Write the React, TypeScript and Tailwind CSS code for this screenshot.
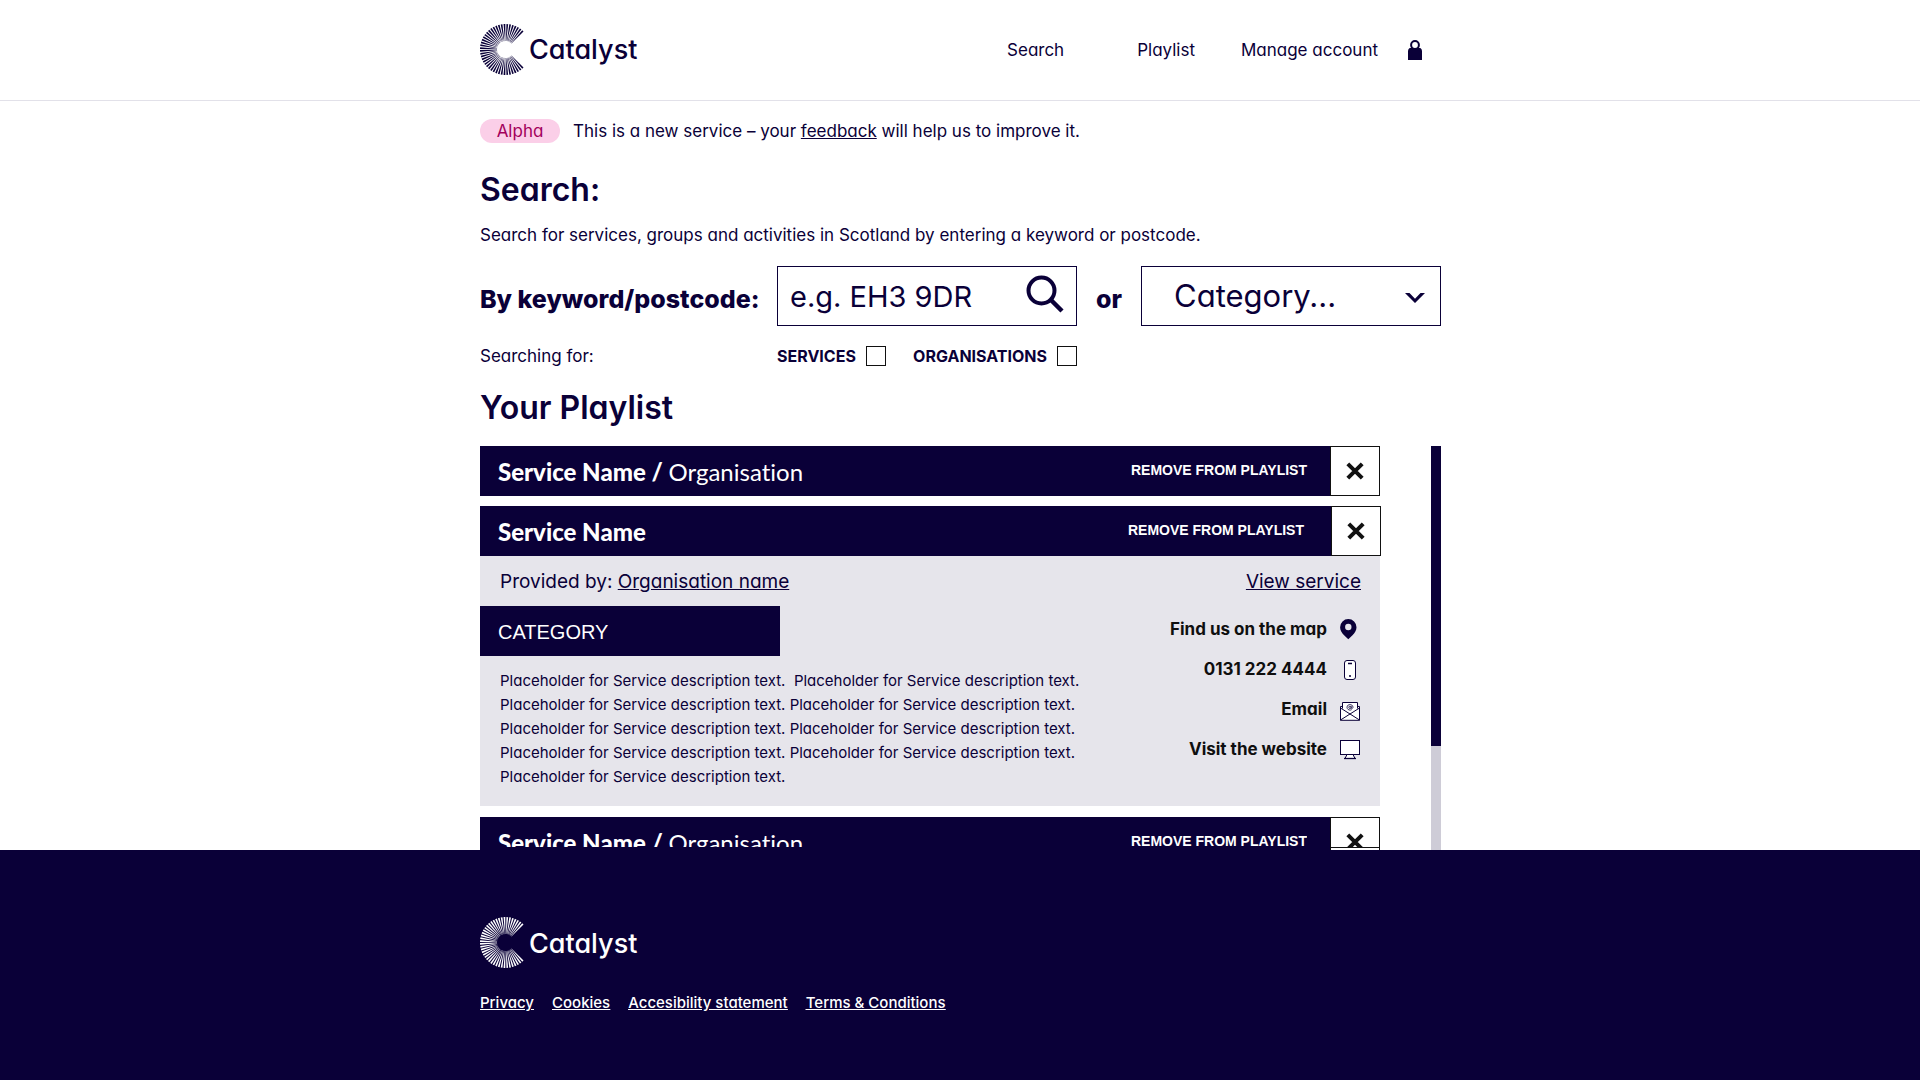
import type { ReactNode } from "react";

const BODY_FONT = "font-['Inter','Open_Sans',sans-serif] [font-feature-settings:'cv11']";

const RAY_COUNT = 42;
const rays = Array.from({ length: RAY_COUNT }, (_, i) => {
  const angle = ((47 + (266 * i) / (RAY_COUNT - 1)) * Math.PI) / 180;
  const outer = 0.034;
  const inner = 0.017;
  const point = (r: number, a: number) =>
    `${(25.5 + r * Math.cos(a)).toFixed(2)},${(25.5 + r * Math.sin(a)).toFixed(2)}`;
  return [
    point(25.5, angle - outer),
    point(25.5, angle + outer),
    point(8.5, angle + inner),
    point(8.5, angle - inner),
  ].join(" ");
});

function Logo() {
  return (
    <a href="#home" className="flex items-center">
      <svg width="51" height="51" viewBox="0 0 51 51" fill="currentColor" aria-hidden="true">
        {rays.map((points) => (
          <polygon key={points} points={points} />
        ))}
      </svg>
      <span className="-ml-0.5 pt-0.5 text-[27px] leading-8 font-medium">Catalyst</span>
    </a>
  );
}

function CrossIcon() {
  return (
    <svg width="18" height="18" viewBox="0 0 18 18" stroke="#111" strokeWidth="4" aria-hidden="true">
      <path d="M1.800 1.800l14.400 14.400M16.200 1.800L1.800 16.200" />
    </svg>
  );
}

function ServiceTitle({ organisation }: { organisation?: string }) {
  return (
    <h3 className="pt-0.5 font-['Lato',sans-serif] text-2xl leading-8 font-black [font-variant-ligatures:none]">
      Service Name
      {organisation && (
        <>
          {" / "}
          <span className="font-normal">{organisation}</span>
        </>
      )}
    </h3>
  );
}

function RemoveLabel() {
  return (
    <span className="ml-auto pb-0.5 font-['Liberation_Sans',Arial,sans-serif] text-sm leading-5 font-bold">
      REMOVE FROM PLAYLIST
    </span>
  );
}

function Contact({ label, icon }: { label: string; icon: ReactNode }) {
  return (
    <li>
      <a href="#contact" className="flex h-10 items-center justify-end gap-[11px]">
        {label}
        <svg width="24" height="24" viewBox="0 0 24 24" fill="none" stroke="#0a0038" aria-hidden="true">
          {icon}
        </svg>
      </a>
    </li>
  );
}

const contacts = [
  {
    label: "Find us on the map",
    icon: (
      <path
        fill="#0a0038"
        stroke="none"
        fillRule="evenodd"
        d="M10.3 2a8.2 8.2 0 0 0-8.2 8.2c0 3.2 1.7 5.6 4 8l4.2 4.1 4.2-4.1c2.3-2.4 4-4.8 4-8A8.2 8.2 0 0 0 10.3 2zm0 4.8a3.2 3.2 0 1 1 0 6.4 3.2 3.2 0 0 1 0-6.4z"
      />
    ),
  },
  {
    label: "0131 222 4444",
    icon: (
      <>
        <rect x="6.5" y="3.5" width="11" height="19" rx="2.5" fill="#fff" />
        <path d="M10 6.5h4M11 19h2" strokeWidth="1.3" />
      </>
    ),
  },
  {
    label: "Email",
    icon: (
      <>
        <path d="M2.5 9.5V23.3h19V9.5z" fill="#fff" />
        <path d="M4.5 12V5.500h15V12L12 17.500z" fill="#fff" stroke="none" />
        <path d="M4.500 11.500v-6h15v6M2.500 11l19 12M21.500 11l-19 12" />
        <circle cx="12" cy="10.300" r="1.200" strokeWidth=".8" />
        <path d="M13.200 9.200v1.500c0 1.200 1.800 1 1.800-.5a3 2.800 0 1 0-1.300 2.400" strokeWidth=".8" />
      </>
    ),
  },
  {
    label: "Visit the website",
    icon: (
      <>
        <rect x="2.500" y="3.500" width="19" height="14" fill="#fff" />
        <path d="M9 17.500l-2 4h10l-2-4z" fill="#fff" />
        <path d="M6 21.500h12" strokeWidth="1.300" />
      </>
    ),
  },
];

const description = [2, 2, 2, 1];
const sentence = "Placeholder for Service description text.";

export default function App() {
  return (
    <div className={`flex min-h-screen flex-col bg-white text-[17px] leading-6 text-[#0a0038] ${BODY_FONT}`}>
      <header className="border-b border-[#e2e1e9]">
        <div className="mx-auto flex h-[100px] w-full max-w-[962px] items-center justify-between pb-0.5 pl-px">
          <Logo />
          <nav className="mr-[19px] flex items-center pt-0.5">
            <a href="#search">Search</a>
            <a href="#playlist" className="ml-[73px]">Playlist</a>
            <a href="#account" className="ml-[46px]">Manage account</a>
            <a href="#account" aria-label="Sign in" className="ml-[30px]">
              <svg width="14" height="20" viewBox="0 0 14 20" aria-hidden="true">
                <path d="M0 20v-9q0-2 1.700-3h10.600q1.700 1 1.700 3v9z" fill="#0a0038" />
                <circle cx="7" cy="5" r="3.900" fill="#fff" stroke="#0a0038" strokeWidth="2" />
              </svg>
            </a>
          </nav>
        </div>
      </header>

      <main className="mx-auto w-full max-w-[962px] pl-px">
        <div className="mt-[18px] flex items-center">
          <strong className="w-20 rounded-full bg-[#fbcfe8] text-center font-normal text-[#a3005c]">Alpha</strong>
          <p className="ml-[13px]">
            This is a new service – your <a href="#feedback" className="underline">feedback</a> will help us to improve it.
          </p>
        </div>

        <h1 className="mt-[27px] text-[32px] leading-10 font-semibold">Search:</h1>
        <p className="mt-[13px]">Search for services, groups and activities in Scotland by entering a keyword or postcode.</p>

        <form>
          <div className="mt-[19px] flex items-center">
            <label htmlFor="keyword" className="flex-1 pt-[5px] text-[25px] font-extrabold">By keyword/postcode:</label>
            <div className="flex h-[60px] w-[300px] items-center border border-current">
              <input
                id="keyword"
                type="text"
                placeholder="e.g. EH3 9DR"
                className="h-full min-w-0 flex-1 pl-3 text-[29px] outline-none placeholder:text-[#0a0038] placeholder:opacity-100"
              />
              <button type="submit" aria-label="Find" className="mr-[12px] mb-[5px]">
                <svg width="38" height="38" viewBox="0 0 38 38" fill="none" stroke="currentColor" strokeWidth="4" aria-hidden="true">
                  <circle cx="15.500" cy="15.500" r="13" />
                  <path d="M24.500 24.500L36 36" strokeWidth="4.500" />
                </svg>
              </button>
            </div>
            <span className="w-16 pt-[5px] text-center text-[25px] font-extrabold">or</span>
            <div className="grid h-[60px] w-[300px] border border-current">
              <select aria-label="Category" className="col-start-1 row-start-1 appearance-none bg-transparent pl-8 text-[31px] leading-[56px] outline-none">
                <option>Category...</option>
              </select>
              <svg width="20" height="10" viewBox="0 0 20 10" fill="currentColor" aria-hidden="true" className="pointer-events-none col-start-1 row-start-1 mt-1 mr-[15px] self-center justify-self-end">
                <path d="M0 0h4.500L10 5.800 15.500 0H20L10 10z" />
              </svg>
            </div>
          </div>

          <div className="mt-5 flex h-5 items-center">
            <span className="w-[297px]">Searching for:</span>
            <div className="flex w-[300px] items-center justify-between text-base font-bold">
              <label className="flex items-center gap-[10px]">
                SERVICES
                <input type="checkbox" className="size-5 appearance-none border border-[#111] checked:bg-[#0a0038]" />
              </label>
              <label className="flex items-center gap-[10px]">
                ORGANISATIONS
                <input type="checkbox" className="size-5 appearance-none border border-[#111] checked:bg-[#0a0038]" />
              </label>
            </div>
          </div>
        </form>

        <h2 className="mt-[22px] text-[32px] leading-10 font-semibold">Your Playlist</h2>

        <div className="mt-[18px] flex items-stretch justify-between">
          <div className="w-[900px]">
            <article className="flex h-[50px] items-center bg-[#0a0038] pl-[18px] text-white">
              <ServiceTitle organisation="Organisation" />
              <RemoveLabel />
              <button aria-label="Remove" className="ml-[23px] flex size-[50px] items-center justify-center border border-[#111] bg-white">
                <CrossIcon />
              </button>
            </article>

            <article className="mt-[10px] bg-[#e6e5eb]">
              <div className="-mr-px flex h-[50px] items-center bg-[#0a0038] pl-[18px] text-white">
                <ServiceTitle />
                <RemoveLabel />
                <button aria-label="Remove" className="ml-[27px] flex size-[50px] items-center justify-center border border-[#111] bg-white">
                  <CrossIcon />
                </button>
              </div>
              <div className="flex h-[50px] items-center justify-between pt-0.5 pr-[19px] pl-5 text-[19px]">
                <p>
                  Provided by: <a href="#organisation" className="underline">Organisation name</a>
                </p>
                <a href="#service" className="underline">View service</a>
              </div>
              <div className="flex justify-between">
                <div className="pb-[17px]">
                  <p className="flex h-[50px] w-[300px] items-center bg-[#0a0038] pt-[2px] pl-[18px] font-['Liberation_Sans',Arial,sans-serif] text-xl text-white">
                    CATEGORY
                  </p>
                  <p className="mt-[13px] pl-5 text-[15px] leading-6">
                    {sentence}&nbsp; {sentence}
                    {description.map((count, i) => (
                      <span key={i} className="block">{Array(count).fill(sentence).join(" ")}</span>
                    ))}
                  </p>
                </div>
                <ul className="pt-[3px] pr-[18px] font-bold text-[#0f0f0f]">
                  {contacts.map((c) => (
                    <Contact key={c.label} label={c.label} icon={c.icon} />
                  ))}
                </ul>
              </div>
            </article>

            <article className="mt-[11px] flex h-[33px] items-start overflow-hidden bg-[#0a0038] pl-[18px] text-white">
              <div className="flex h-[30px] flex-1 items-start overflow-hidden pt-2">
                <ServiceTitle organisation="Organisation" />
                <span className="ml-auto flex pt-1.5"><RemoveLabel /></span>
              </div>
              <div className="ml-[23px] h-full border-x border-[#111] bg-white">
                <button aria-label="Remove" className="flex h-[31px] w-12 items-start justify-center overflow-hidden border-y border-[#111] pt-[15px]">
                  <span className="shrink-0"><CrossIcon /></span>
                </button>
              </div>
            </article>
          </div>
          <div className="w-[10px] bg-[#ceccd7]">
            <div className="h-[300px] bg-[#0a0038]" />
          </div>
        </div>
      </main>

      <footer className="flex-1 bg-[#0a0038] text-white">
        <div className="mx-auto max-w-[962px] pt-[67px] pb-[67px] pl-px">
          <Logo />
          <nav className="mt-[25px] flex gap-[18px] text-[15px] leading-5 font-medium underline">
            <a href="#privacy">Privacy</a>
            <a href="#cookies">Cookies</a>
            <a href="#accessibility">Accesibility statement</a>
            <a href="#terms">Terms &amp; Conditions</a>
          </nav>
        </div>
      </footer>
    </div>
  );
}
